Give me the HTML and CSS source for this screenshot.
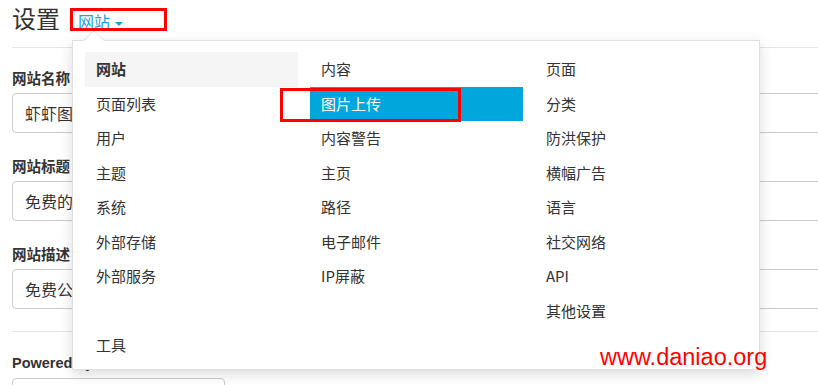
FILE: index.html
```html
<!DOCTYPE html>
<html lang="zh-CN">
<head>
    <meta charset="UTF-8">
    <meta name="viewport" content="width=device-width, initial-scale=1.0">
    <title>设置</title>
    <link rel="stylesheet" href="styles.css">
</head>
<body>
    <header class="page-header">
        <h1>设置</h1>
        <a class="section-toggle" href="#">网站 <span class="caret"></span></a>
    </header>

    <form class="settings-form">
        <div class="field">
            <label>网站名称</label>
            <div class="input">虾虾图床</div>
        </div>
        <div class="field">
            <label>网站标题</label>
            <div class="input">免费的</div>
        </div>
        <div class="field">
            <label>网站描述</label>
            <div class="input">免费公</div>
        </div>
        <hr>
        <div class="field">
            <label class="latin">Powered by</label>
            <div class="input short"></div>
        </div>
    </form>

    <!-- 下拉菜单 -->
    <div class="dropdown">
        <ul class="menu-col">
            <li class="menu-header">网站</li>
            <li>页面列表</li>
            <li>用户</li>
            <li>主题</li>
            <li>系统</li>
            <li>外部存储</li>
            <li>外部服务</li>
            <li class="menu-gap"></li>
            <li>工具</li>
        </ul>
        <ul class="menu-col">
            <li>内容</li>
            <li class="active">图片上传</li>
            <li>内容警告</li>
            <li>主页</li>
            <li>路径</li>
            <li>电子邮件</li>
            <li>IP屏蔽</li>
        </ul>
        <ul class="menu-col">
            <li>页面</li>
            <li>分类</li>
            <li>防洪保护</li>
            <li>横幅广告</li>
            <li>语言</li>
            <li>社交网络</li>
            <li>API</li>
            <li>其他设置</li>
        </ul>
    </div>

    <!-- 标注 -->
    <div class="mark mark-toggle"></div>
    <div class="mark mark-item"></div>
    <div class="watermark">www.daniao.org</div>
</body>
</html>
```

FILE: styles.css
```css
* {
    box-sizing: border-box;
    margin: 0;
    padding: 0;
}

html {
    overflow: hidden;
    height: 385px;
}

body {
    font-family: "Noto Sans CJK SC", "Liberation Sans", sans-serif;
    color: #333;
    background: #fff;
    padding: 0 0 0 12px;
    width: 840px;
    overflow: hidden;
    height: 385px;
}

.page-header {
    display: flex;
    align-items: baseline;
    line-height: 36px;
    padding-bottom: 8px;
    border-bottom: 1px solid #e5e5e5;
}

.page-header h1 {
    font-size: 24px;
    font-weight: normal;
}

.section-toggle {
    margin-left: 18px;
    font-size: 16px;
    color: #1ba1e2;
    text-decoration: none;
}

.caret {
    display: inline-block;
    width: 0;
    height: 0;
    border-top: 4px solid #1ba1e2;
    border-left: 4px solid transparent;
    border-right: 4px solid transparent;
    vertical-align: middle;
    margin-left: 1px;
}

.settings-form {
    padding-top: 21px;
}

.field {
    margin-bottom: 24px;
}

.field label {
    display: block;
    font-size: 14.5px;
    font-weight: bold;
    line-height: 18px;
    margin-bottom: 6px;
}

.field label.latin {
    font-family: "Liberation Sans", sans-serif;
}

.input {
    height: 40px;
    border: 1px solid #ccc;
    border-radius: 4px;
    padding: 0 12px;
    font-size: 16px;
    line-height: 38px;
    white-space: nowrap;
    overflow: hidden;
}

.input.short {
    width: 213px;
}

hr {
    border: 0;
    border-top: 1px solid #e5e5e5;
    margin: -2px 0 22px;
}

.dropdown {
    position: absolute;
    left: 72px;
    top: 40px;
    width: 688px;
    height: 330px;
    background: #fff;
    border: 1px solid rgba(0, 0, 0, 0.12);
    box-shadow: 0 4px 12px rgba(0, 0, 0, 0.15);
    padding: 11px 12px 8px;
    display: grid;
    grid-template-columns: repeat(3, 213px);
    column-gap: 12px;
    align-items: start;
}

.dropdown::before,
.dropdown::after {
    content: "";
    position: absolute;
    left: 11px;
    width: 0;
    height: 0;
    border-left: 10px solid transparent;
    border-right: 10px solid transparent;
}

.dropdown::before {
    top: -11px;
    border-bottom: 10px solid rgba(0, 0, 0, 0.12);
}

.dropdown::after {
    top: -10px;
    border-bottom: 10px solid #fff;
}

.menu-col {
    list-style: none;
}

.menu-col li {
    height: 34.5px;
    line-height: 34.5px;
    padding: 0 12px 0 11px;
    font-size: 15px;
    white-space: nowrap;
}

.menu-col .menu-header {
    background: #f5f5f5;
    font-weight: bold;
}

.menu-col .active {
    background: #00a6dc;
    color: #fff;
}

.mark {
    position: absolute;
    border: 3px solid #f00;
}

.mark-toggle {
    left: 70px;
    top: 8px;
    width: 97px;
    height: 23px;
}

.mark-item {
    left: 280px;
    top: 88px;
    width: 181px;
    height: 34px;
}

.watermark {
    position: absolute;
    left: 600px;
    top: 344px;
    font-family: "Liberation Sans", sans-serif;
    font-size: 23.5px;
    line-height: 26px;
    color: #f00;
}
```
